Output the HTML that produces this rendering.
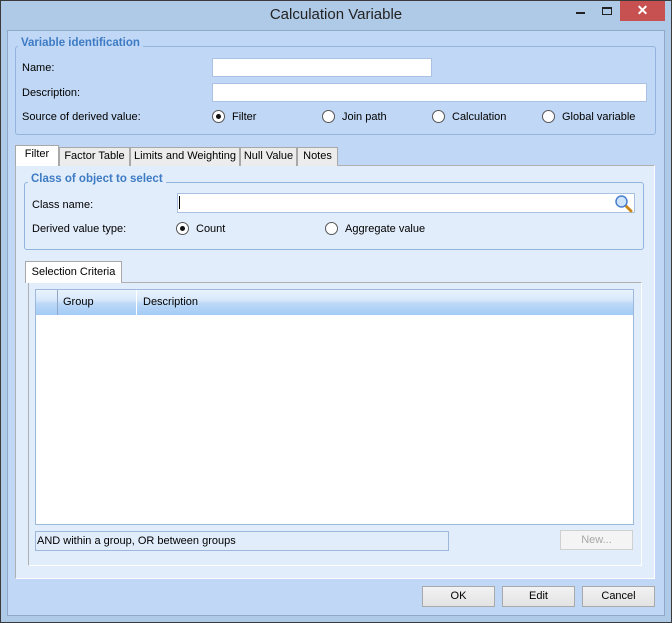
<!DOCTYPE html>
<html><head><meta charset="utf-8"><style>
*{box-sizing:border-box;margin:0;padding:0}
body{width:672px;height:623px;overflow:hidden;font-family:"Liberation Sans",sans-serif;font-size:11px;color:#000;background:#afcae6;position:relative}
.a{position:absolute}
.frame{left:0;top:0;width:672px;height:623px;border:1px solid #3a3a3a;background:#afcae6}
.client{left:7px;top:30px;width:658px;height:586px;background:#c0d7f5;border:1px solid #8fa9c8}
.gb{border:1px solid #93b4dc;border-radius:3px}
.leg{font-weight:bold;color:#3d7bc4;font-size:11.5px;padding:0 3px}
.inp{background:#fff;border:1px solid #a9c2e3}
.rad{width:13px;height:13px;border-radius:50%;border:1px solid #555;background:#fff}
.rad.on::after{content:"";position:absolute;left:3px;top:3px;width:5px;height:5px;border-radius:50%;background:#111}
.tab{top:147px;height:19px;background:#ececec;border:1px solid #a8a8a8;border-bottom:none;text-align:center;line-height:17px;font-size:11px}
.btn{top:586px;width:73px;height:21px;background:linear-gradient(#f2f2f2,#e3e3e3);border:1px solid #a9a9a9;text-align:center;line-height:19px;font-size:11px}
</style></head><body>
<div class="a frame"></div>
<div class="a" style="left:0;top:6px;width:672px;text-align:center;font-size:15px;color:#222">Calculation Variable</div>
<div class="a" style="left:576px;top:12px;width:9px;height:2px;background:#222"></div>
<div class="a" style="left:602px;top:7px;width:10px;height:8px;border:1px solid #222;border-top-width:2px"></div>
<div class="a" style="left:620px;top:1px;width:45px;height:20px;background:#c75050;color:#fff;text-align:center;font-size:14px;line-height:19px;font-weight:bold">✕</div>
<div class="a client"></div>

<div class="a gb" style="left:15px;top:46px;width:641px;height:89px"></div>
<div class="a leg" style="left:18px;top:37px;background:#c0d7f5">Variable identification</div>
<div class="a" style="left:22px;top:62px">Name:</div>
<div class="a inp" style="left:212px;top:58px;width:220px;height:19px"></div>
<div class="a" style="left:22px;top:87px">Description:</div>
<div class="a inp" style="left:212px;top:83px;width:435px;height:19px"></div>
<div class="a" style="left:22px;top:111px">Source of derived value:</div>
<div class="a rad on" style="left:212px;top:110px"></div><div class="a" style="left:232px;top:111px">Filter</div>
<div class="a rad" style="left:322px;top:110px"></div><div class="a" style="left:342px;top:111px">Join path</div>
<div class="a rad" style="left:432px;top:110px"></div><div class="a" style="left:452px;top:111px">Calculation</div>
<div class="a rad" style="left:542px;top:110px"></div><div class="a" style="left:562px;top:111px">Global variable</div>

<div class="a" style="left:15px;top:165px;width:640px;height:414px;background:#e2edfb;border:1px solid #b0b0b0;border-right-color:#fff;border-bottom-color:#fff"></div>
<div class="a tab" style="left:15px;top:145px;width:44px;height:21px;background:#fff;border-color:#a8a8a8">Filter</div>
<div class="a tab" style="left:59px;width:71px">Factor Table</div>
<div class="a tab" style="left:130px;width:110px">Limits and Weighting</div>
<div class="a tab" style="left:240px;width:57px">Null Value</div>
<div class="a tab" style="left:297px;width:41px">Notes</div>

<div class="a gb" style="left:24px;top:182px;width:620px;height:68px"></div>
<div class="a leg" style="left:28px;top:173px;background:#e2edfb">Class of object to select</div>
<div class="a" style="left:32px;top:199px">Class name:</div>
<div class="a inp" style="left:177px;top:193px;width:458px;height:20px"></div>
<div class="a" style="left:179px;top:196px;width:1px;height:13px;background:#000"></div>
<svg class="a" style="left:614px;top:194px" width="20" height="20" viewBox="0 0 20 20"><line x1="11" y1="11" x2="17" y2="17" stroke="#c9881c" stroke-width="3" stroke-linecap="round"/><circle cx="7.5" cy="7.5" r="5.5" fill="#cfe4fb" stroke="#4a7fd0" stroke-width="1.5"/></svg>
<div class="a" style="left:32px;top:223px">Derived value type:</div>
<div class="a rad on" style="left:176px;top:222px"></div><div class="a" style="left:196px;top:223px">Count</div>
<div class="a rad" style="left:325px;top:222px"></div><div class="a" style="left:345px;top:223px">Aggregate value</div>

<div class="a" style="left:28px;top:282px;width:614px;height:284px;background:#e2edfb;border:1px solid #b0b0b0;border-right-color:#fff;border-bottom-color:#fff"></div>
<div class="a" style="left:25px;top:261px;width:97px;height:22px;background:#fff;border:1px solid #a8a8a8;border-bottom:none;line-height:20px;text-align:center">Selection Criteria</div>
<div class="a" style="left:35px;top:289px;width:599px;height:236px;background:#fff;border:1px solid #9cb9dd"></div>
<div class="a" style="left:36px;top:290px;width:597px;height:25px;background:linear-gradient(#eaf3fd 0%,#d7e8fb 40%,#bcd8f7 55%,#a2cbf6 100%)"></div>
<div class="a" style="left:57px;top:290px;width:1px;height:25px;background:#8fa8c8"></div>
<div class="a" style="left:136px;top:290px;width:1px;height:25px;background:#fff"></div>
<div class="a" style="left:63px;top:296px">Group</div>
<div class="a" style="left:143px;top:296px">Description</div>

<div class="a" style="left:35px;top:531px;width:414px;height:20px;border:1px solid #9cb9dd;line-height:18px;padding-left:1px">AND within a group, OR between groups</div>
<div class="a" style="left:560px;top:530px;width:73px;height:20px;border:1px solid #d0d0d0;background:#f4f4f4;color:#a8a8a8;text-align:center;line-height:18px">New...</div>

<div class="a btn" style="left:422px">OK</div>
<div class="a btn" style="left:502px">Edit</div>
<div class="a btn" style="left:582px">Cancel</div>
</body></html>
